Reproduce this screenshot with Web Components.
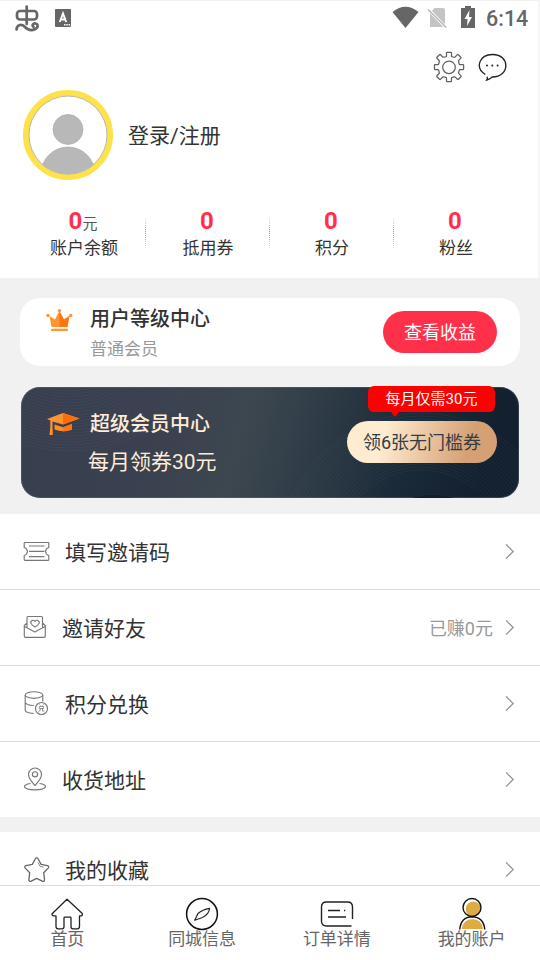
<!DOCTYPE html>
<html lang="zh-CN">
<head>
<meta charset="utf-8">
<title>我的账户</title>
<style>
html,body{margin:0;height:960px;overflow:hidden;background:#f1f1f1}
body{font-family:Roboto,"Noto Sans CJK SC",sans-serif;color:#333}
</style>
</head>
<body>
<account-page></account-page>
<script>
// Each icon: view box in the coordinates of the 540x960 page, then its shapes.
const ICONS = {
  bug: ['14 4 27 28', '<g fill="none" stroke="#666" stroke-width="2.7" stroke-linecap="round" stroke-linejoin="round"><rect x="17" y="11" width="20" height="8.5" rx="3"/><path d="M26.7 6.5V24M16.5 29.5C17 24.5 22 23.5 25 27c3 3.200 7 3.500 10 2.200 3.500-1.500 3.300-5.200.5-5.700-2.700-.4-3.700 2.300-2 3.400"/></g>'],
  lang: ['54 8 18 20', '<rect x="55" y="9" width="16" height="18" rx="1" fill="#666"/><path d="M59.800 22 63 13.500 66.200 22M61 19.500h4" fill="none" stroke="#fff" stroke-width="2"/><path d="M64 24.800h1.500M66.300 24.800h1.500M68.600 24.800h1.500" stroke="#fff" stroke-width="1.500"/>'],
  wifi: ['392 6 27 23', '<path d="M392.500 12Q405.500 1.500 418.500 12L405.500 28Z" fill="#666"/>'],
  nosim: ['427 6 21 23', '<path d="M434.500 8H443a2 2 0 0 1 2 2v17h-15V13Z" fill="#c4c4c4"/><path d="M427.500 8.500 447 28.500" stroke="#fff" stroke-width="3"/><path d="M428 9.500 446.300 27.500" stroke="#b8b8b8" stroke-width="1.500"/>'],
  battery: ['460 6 16 23', '<path d="M461 8h4V6h6v2h4v20h-14Z" fill="#666"/><path d="m469.500 10-5 9h3l-.5 7 5-9h-3Z" fill="#fff"/>'],
  gear: ['433 51 32 32', '<g fill="none" stroke="#606060" stroke-width="1.250" stroke-linejoin="round"><circle cx="449" cy="67.300" r="6.300"/><path d="M446.500 56.500v-3.500q0-.6.6-.6h3.800q.6 0 .6.600v3.500q2 1 3.500.7l2.300-2.500q.5-.4 1 0l2.500 2.500q.4.500 0 1l-2.200 2.500q0 2 .9 3.800h3.400q.7 0 .7.600v4q0 .6-.7.600h-3.400q-1 2-.8 3.600l2.300 2.500q.4.500 0 1l-2.600 2.500q-.5.400-1 0l-2.400-2.400q-2-.1-3.500.8v3.400q0 .6-.6.600h-3.800q-.6 0-.6-.6v-3.400q-2-1-3.600-.8l-2.400 2.400q-.5.400-1 0l-2.600-2.500q-.4-.5 0-1l2.400-2.500q0-2-.9-3.600h-3.300q-.6 0-.6-.6v-4q0-.6.600-.6h3.300q1-2 .9-3.800l-2.400-2.500q-.4-.5 0-1l2.600-2.500q.5-.4 1 0l2.400 2.400q2 .3 3.600-.6Z"/></g>'],
  chat: ['478 53 29 29', '<path d="M485.300 74.500C474.500 67.500 479.500 54.500 492.500 54.500c18.200 0 17.500 22.700-.3 22.500q-1.800 2-5.500 3 1.300-2.300.2-3.200" fill="none" stroke="#222" stroke-width="1.350"/><g fill="#222"><circle cx="487" cy="65.600" r="1"/><circle cx="492.300" cy="65.600" r="1"/><circle cx="497.600" cy="65.600" r="1"/></g>'],
  avatar: ['23 90 90 90', '<defs><clipPath id="c"><circle cx="68" cy="135" r="39.500"/></clipPath></defs><circle cx="68" cy="135" r="42" fill="#fff" stroke="#ffe14a" stroke-width="6"/><circle cx="68" cy="135" r="39" fill="none" stroke="#b8b8b8" stroke-width="1"/><g clip-path="url(#c)" fill="#b8b8b8" stroke="#aaa" stroke-width=".7"><circle cx="68" cy="129.500" r="15"/><circle cx="68" cy="174" r="27"/></g>'],
  crown: ['46 308 27 24', '<g fill="#ff9535"><path d="M49.500 316 55 319.500 59.400 311 63.900 319.500 69.500 316 67.300 327H51.500Z"/><circle cx="48" cy="315.500" r="1.700"/><circle cx="59.400" cy="310.600" r="1.700"/><circle cx="70.700" cy="315.500" r="1.700"/><rect x="51" y="328.800" width="17" height="2.200" rx=".8"/></g><path d="M59.400 311 63.900 319.500 69.500 316 67.300 327H59.400Z" fill="#ff750f"/>'],
  cap: ['46 412 34 24', '<path d="M47 419 63 413 79.500 418.500 63 424.500 52.500 421.500V427l.3 8H49.500l.8-8v-6.500Z" fill="#ff9330"/><path d="M63 413 79.500 418.500 63 424.500Z" fill="#ff6e0a"/><path d="M54.500 424.500 63 427.200 72 424v5.500Q63 433 54.500 429.500Z" fill="#ff8c28"/><path d="M63 427.200 72 424v5.500q-4 2-9 2Z" fill="#ff750f"/>'],
  ticket: ['23 541 27 21', '<g fill="none" stroke="#777" stroke-width="1.150" stroke-linejoin="round"><path d="M25 542.500H48q.8 0 .8.800v4.200q-3.200 1-3.200 4t3.200 4v4q0 .8-.8.800H25q-.8 0-.8-.8v-4q3.200-1 3.200-4t-3.200-4v-4.200q0-.8.800-.8Z"/><path d="M29 546h15.500M29 551.300h15.500M29 556.600h15.500"/></g>'],
  invite: ['23 615 24 24', '<g fill="none" stroke="#777" stroke-width="1.150" stroke-linejoin="round"><path d="M27 628v-10.500q0-1 1-1H41.500q1 0 1 1V628M27 623l-2.700 2.500V636q0 1.300 1.300 1.300H44q1.300 0 1.300-1.300V625.500L42.500 623M24.500 626.500 34.800 632 45 626.500"/><path d="M35 627q-7-4.500-2.700-6.600 1.500-.5 2.700 1 1.200-1.500 2.700-1Q42 622.500 35 627Z"/></g>'],
  points: ['23 690 27 26', '<g fill="none" stroke="#777" stroke-width="1.150"><ellipse cx="34" cy="695" rx="8.800" ry="3.300"/><path d="M25.200 695v15q0 3 8.500 3.500M42.800 695v6.500M25.200 702.500q2 3 8.600 3"/><circle cx="41.500" cy="708.500" r="6"/><path d="m39.500 704.500 1 1.200M43.500 704.500l-1 1.200M39.300 706.500h4.300v2h-4.300ZM40.500 708.500q0 2.500-2 3M42.500 708.500v2.500h2" stroke-width=".8"/></g>'],
  pin: ['23 767 24 24', '<g fill="none" stroke="#777" stroke-width="1.150" stroke-linejoin="round"><path d="M35 785.500Q28.500 778.500 28.500 774.500a6.500 6.500 0 0 1 13 0Q41.500 778.500 35 785.500Z"/><circle cx="35" cy="774.300" r="2.600"/><path d="M30.500 783.500c-9 1-8.500 6.300 4.500 6.300s13.500-5.300 4.500-6.300"/></g>'],
  star: ['23 856 27 27', '<path d="M35.200 859q1.500-2.300 3 0l2.900 5.400 6.200 1.200q2.200.7.900 2.500l-4.500 4.700.8 6.600q0 2.600-2.300 1.700l-5.500-2.700-5.500 2.700q-2.300.9-2.300-1.700l.8-6.600-4.500-4.700q-1.300-1.800.9-2.500l6.200-1.200Z" fill="none" stroke="#666" stroke-width="1.300" stroke-linejoin="round"/><path d="m38 862.500 2 3.800 3.500.9" fill="none" stroke="#888"/>'],
  chevron: ['504 543 12 17', '<path d="M506 544.300 513.200 551.500 506 558.700" fill="none" stroke="#909090" stroke-width="1.200"/>'],
  home: ['50 897 34 34', '<path d="M67 899.300 82.300 913.500q.3 2.400-1.500 2.400h-1.300V926.500q0 2.300-2.300 2.300H73q-2 0-2-2V918q0-.8-.8-.8h-5.400q-.8 0-.8.800v8.800q0 2-2 2h-3.800q-2.200 0-2.200-2.300V915.900h-2.300q-1.900 0-1.600-2.200Z" fill="none" stroke="#222" stroke-width="1.300" stroke-linejoin="round"/>'],
  compass: ['185 897 34 34', '<circle cx="202" cy="914" r="15.400" fill="#fff" stroke="#111" stroke-width="1.500"/><path d="M209.600 908.300Q209 914.500 202.500 917.500L194.700 920.200 198 913.500Q202.500 909.500 209.600 908.300Z" fill="none" stroke="#222" stroke-width="1.200" stroke-linejoin="round"/>'],
  order: ['320 897 34 34', '<g fill="none" stroke="#222" stroke-width="1.400"><path d="M352.500 919V907q0-5-5-5h-21q-5 0-5 5v14q0 5 5 5h25"/><path d="M328 910.500h12M344 910.500h1.300M328 917h18" /></g>'],
  user: ['455 897 34 34', '<circle cx="473.300" cy="909" r="7.600" fill="#dfac43"/><path d="M461.500 929q2-10 11-10 9 0 10.500 10Z" fill="#dfac43"/><circle cx="472" cy="907.500" r="9" fill="none" stroke="#111" stroke-width="1.400"/><path d="M459.700 929.500Q461 917 472 916.800 483.500 917 484.800 929.500" fill="none" stroke="#111" stroke-width="1.400"/>']
};

class UiElement extends HTMLElement {
  connectedCallback() {
    if (!this.shadowRoot) this.attachShadow({ mode: 'open' }).innerHTML = this.render();
  }
  attr(name) { return this.getAttribute(name) || ''; }
}
const define = (name, render) => customElements.define(name, class extends UiElement {
  render() { return render(this); }
});

define('ui-icon', el => {
  const [box, shapes] = ICONS[el.attr('name')];
  const [, , w, h] = box.split(' ');
  return `<style>:host{display:block;flex:none;width:${w}px;height:${h}px}svg{display:block}</style>
  <svg width="${w}" height="${h}" viewBox="${box}">${shapes}</svg>`;
});

define('status-bar', () => `<style>
  :host{display:flex;align-items:flex-start;height:36px;box-sizing:border-box;border-top:1px solid #f1f1f1;padding:3px 10px 0 14px}
  .lang{margin:4px 0 0 13px}.right{display:flex;margin-left:auto;padding-top:2px}
  .sim{margin-left:8px}.bat{margin-left:12px}
  time{box-sizing:border-box;width:52px;font:500 21.5px/26px Roboto,sans-serif;color:#666;padding-left:10px;white-space:nowrap}
  </style><ui-icon name="bug"></ui-icon><ui-icon class="lang" name="lang"></ui-icon>
  <div class="right"><ui-icon name="wifi"></ui-icon><ui-icon class="sim" name="nosim"></ui-icon><ui-icon class="bat" name="battery"></ui-icon><time>6:14</time></div>`);

define('profile-header', () => `<style>
  :host{display:block}
  .tools{display:flex;justify-content:flex-end;gap:13px;height:39px;padding:15px 31px 0 0}
  .tools ui-icon:last-child{margin-top:2px}
  .who{display:flex;align-items:center;gap:15px;padding-left:23px;height:90px;font-size:21px}
  span{line-height:30px;padding-top:1px}
  </style><div class="tools"><ui-icon name="gear"></ui-icon><ui-icon name="chat"></ui-icon></div>
  <div class="who"><ui-icon name="avatar"></ui-icon><span>登录/注册</span></div>`);

define('stat-item', el => `<style>
  :host{display:block;flex:1;text-align:center;position:relative}
  .v{height:28px;line-height:28px;font-size:15px;padding-right:2px;color:#555}b{font-size:24px;color:#ff314a}
  .l{font-size:17px;line-height:27px}
  :host(:not(:last-child))::after{content:"";position:absolute;right:0;top:8px;width:1px;height:36px;background:repeating-linear-gradient(#0000 0 1px,#fff 1px 2px),linear-gradient(#ff314a00,#888 50%,#ff314a00)}
  </style><div class="v"><b>${el.attr('value')}</b><slot></slot></div><div class="l">${el.attr('label')}</div>`);

define('level-card', () => `<style>
  :host{display:flex;box-sizing:border-box;height:68px;margin:20px 20px 0;padding:10px 23px 0 26px;border-radius:20px;background:#fff}
  .t{margin-left:17px;margin-top:-4px}.n{font-size:20px;font-weight:500;line-height:30px}.s{font-size:17px;line-height:30px;color:#999}
  .b{box-sizing:border-box;padding-top:1px;margin:3px 0 0 auto;width:114px;height:42px;border-radius:21px;background:#ff314a;color:#fff;font-size:18px;line-height:42px;text-align:center}
  </style><ui-icon name="crown"></ui-icon><div class="t"><div class="n">用户等级中心</div><div class="s">普通会员</div></div><div class="b">查看收益</div>`);

define('vip-card', () => {
  const rings = (cx, cy, from, count) => Array.from({ length: count }, (_, i) =>
    `<circle cx="${cx}" cy="${cy}" r="${from + i * 3}"/>`).join('');
  return `<style>
  :host{display:flex;position:relative;box-sizing:border-box;width:498px;height:111px;margin:21px 21px 16px;padding:25px 22px 0 25px;border-radius:19px;background:linear-gradient(105deg,#373e4e 0,#39404f 25%,#3d474f 44%,#303d48 57%,#1c2b39 75%,#12202f 92%);box-shadow:inset 0 0 0 1px #65707b66;color:#ffebd6}
  .rings{position:absolute;inset:0;border-radius:19px}
  ui-icon,.t{position:relative}.t{margin-left:10px;margin-top:-3px}
  .n{font-size:20px;font-weight:500;line-height:30px}.s{font-size:21px;line-height:30px;margin:8px 0 0 -2px}
  .b{position:relative;box-sizing:border-box;padding-top:1px;margin:9px 0 0 auto;width:150px;height:42px;border-radius:21px;background:linear-gradient(105deg,#ffebd0 25%,#d5a174 80%);color:#333d43;font-size:18px;line-height:42px;text-align:center}
  .tip{position:absolute;left:347px;top:-1px;width:127px;height:26px;border-radius:6px;background:red;color:#fff;font-size:15px;line-height:26px;text-align:center}
  .tip::after{content:"";position:absolute;left:23px;top:26px;border:4px solid transparent;border-top:5px solid red;border-bottom:0}
  </style><svg class="rings" width="498" height="111" fill="none" stroke="#8295a3" stroke-opacity=".09">${rings(48, -90, 85, 24)}<circle cx="412" cy="167" r="60" fill="#12202f"/>${rings(400, 167, 84, 20)}</svg>
  <ui-icon name="cap"></ui-icon><div class="t"><div class="n">超级会员中心</div><div class="s">每月领券30元</div></div><div class="b">领6张无门槛券</div><div class="tip">每月仅需30元</div>`;
});

define('menu-row', el => `<style>
  :host{display:flex;align-items:center;box-sizing:border-box;height:76px;padding:0 24px 0 23px;background:#fff;border-bottom:1px solid #ddd;font-size:21px}
  :host([last]){height:75px;border:0}
  [name=invite],[name=points],[name=pin]{margin-bottom:1px}
  .l{margin-left:15px;line-height:30px;padding-top:3px}.r{margin-left:auto;margin-right:11px;color:#999;font-size:18px;line-height:26px;padding-top:2px}
  </style><ui-icon name="${el.attr('icon')}"></ui-icon><span class="l">${el.attr('label')}</span><span class="r"><slot></slot></span><ui-icon name="chevron"></ui-icon>`);

define('tab-item', el => `<style>
  :host{display:flex;flex:1;flex-direction:column;align-items:center;padding-top:11px;font-size:17px;color:#666}
  span{position:relative;line-height:24px;margin-top:-4px}
  </style><ui-icon name="${el.attr('icon')}"></ui-icon><span><slot></slot></span>`);

define('tab-bar', () => `<style>:host{display:flex;box-sizing:border-box;height:75px;padding-right:1px;border-top:1px solid #ddd;background:#fff}</style><slot></slot>`);

define('account-page', () => `<style>
  :host{display:flex;flex-direction:column;height:960px;overflow:hidden}
  .top{background:#fff;border-right:2px solid #f5f5f5;height:278px;box-sizing:border-box}
  .stats{display:flex;padding:27px 20px 0 22px}
  main{flex:1;min-height:0;overflow:hidden}.gap{height:15px}
  </style><main><div class="top"><status-bar></status-bar><profile-header></profile-header>
  <div class="stats"><stat-item value="0" label="账户余额">元</stat-item><stat-item value="0" label="抵用券"></stat-item><stat-item value="0" label="积分"></stat-item><stat-item value="0" label="粉丝"></stat-item></div></div>
  <level-card></level-card><vip-card></vip-card>
  <menu-row icon="ticket" label="填写邀请码"></menu-row><menu-row icon="invite" label="邀请好友">已赚0元</menu-row><menu-row icon="points" label="积分兑换"></menu-row><menu-row icon="pin" label="收货地址" last></menu-row>
  <div class="gap"></div><menu-row icon="star" label="我的收藏"></menu-row></main>
  <tab-bar><tab-item icon="home">首页</tab-item><tab-item icon="compass">同城信息</tab-item><tab-item icon="order">订单详情</tab-item><tab-item icon="user">我的账户</tab-item></tab-bar>`);
</script>
</body>
</html>
